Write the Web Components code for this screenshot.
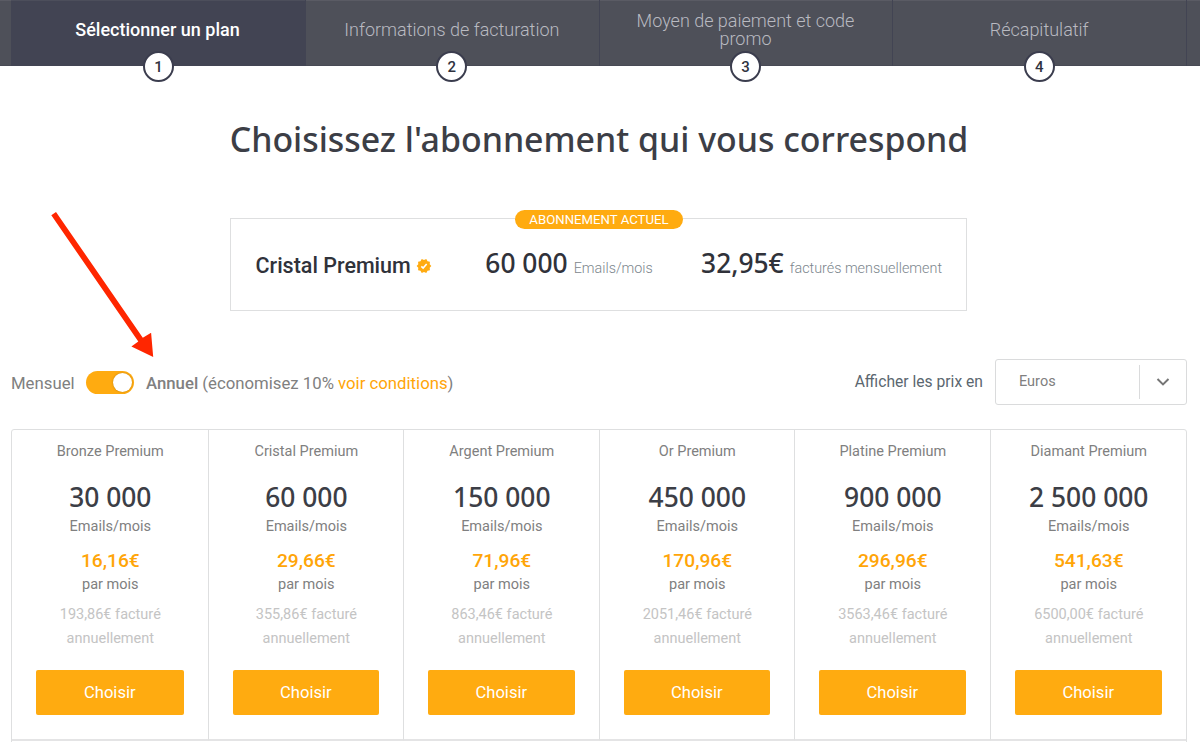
<!DOCTYPE html>
<html lang="fr">
<head>
<meta charset="utf-8">
<title>Choisir un abonnement</title>
<style>
    body {
        margin: 0;
        height: 742px;
        overflow: hidden;
        background: #fff;
        color: #808080;
        font-family: Roboto, sans-serif;
    }
    main { padding: 0 13px 0 11px; }
    h1 {
        margin: 0 0 55px;
        padding: 49px 0 0;
        color: #3c3e46;
        font: 500 33.86px/48px "Noto Sans", sans-serif;
        text-align: center;
        white-space: nowrap;
    }
    .toolbar {
        display: flex;
        justify-content: space-between;
        align-items: center;
        height: 46px;
        margin: 48px 0 24px;
    }
</style>
</head>
<body>

<step-bar>
    <step-item num="1" active>Sélectionner un plan</step-item>
    <step-item num="2">Informations de facturation</step-item>
    <step-item num="3">Moyen de paiement et code promo</step-item>
    <step-item num="4">Récapitulatif</step-item>
</step-bar>

<main>
    <h1>Choisissez l'abonnement qui vous correspond</h1>

    <current-plan>
        <span slot="badge">Abonnement actuel</span>
        <span slot="name">Cristal Premium</span>
        <span slot="volume">60 000</span>
        <span slot="unit">Emails/mois</span>
        <span slot="price">32,95€</span>
        <span slot="billing">facturés mensuellement</span>
    </current-plan>

    <div class="toolbar">
        <billing-toggle checked>
            <span slot="off">Mensuel</span>
            <span slot="on">Annuel</span>
            <span slot="note">(économisez 10% </span>
            <a slot="link">voir conditions</a>
        </billing-toggle>
        <currency-select label="Afficher les prix en">Euros</currency-select>
    </div>

    <plan-grid>
        <plan-card name="Bronze Premium" emails="30 000" price="16,16€" total="193,86€"></plan-card>
        <plan-card name="Cristal Premium" emails="60 000" price="29,66€" total="355,86€"></plan-card>
        <plan-card name="Argent Premium" emails="150 000" price="71,96€" total="863,46€"></plan-card>
        <plan-card name="Or Premium" emails="450 000" price="170,96€" total="2051,46€"></plan-card>
        <plan-card name="Platine Premium" emails="900 000" price="296,96€" total="3563,46€"></plan-card>
        <plan-card name="Diamant Premium" emails="2 500 000" price="541,63€" total="6500,00€"></plan-card>
    </plan-grid>
</main>

<pointer-arrow></pointer-arrow>

<script>
/** Base class: clones the markup of the element into an open shadow root */
class BaseElement extends HTMLElement {
    constructor() {
        super()
        const template = document.createElement('template')
        template.innerHTML = this.constructor.markup
        this.attachShadow({ mode: 'open' })
            .append(template.content.cloneNode(true))
    }

    // Copy attribute values into the [data-attr] nodes
    connectedCallback() {
        this.shadowRoot.querySelectorAll('[data-attr]').forEach( el => {
            el.textContent = this.getAttribute(el.dataset.attr)
        })
    }
}

// Header with the steps of the order
class StepBar extends BaseElement {
    static markup = `
        <style>
            :host {
                display: grid;
                grid-template-columns: 295px repeat(3, 1fr);
                box-sizing: border-box;
                height: 66px;
                padding: 0 13px 0 11px;
                background: #4e5059;
                box-shadow: inset 0 1px #5a5b64, inset 0 -1px #484a55;
            }
        </style>
        <slot></slot>
    `
}

class StepItem extends BaseElement {
    static markup = `
        <style>
            :host {
                display: flex;
                position: relative;
                align-items: center;
                justify-content: center;
                box-sizing: border-box;
                height: 66px;
                padding: 0 31px 7px 30px;
                border-right: 1px solid #424453;
                color: #b9bac1;
                font-size: 18px;
                font-weight: 300;
                line-height: 18px;
                text-align: center;
            }
            :host([active]) {
                background: #424453;
                box-shadow: inset 0 1px #4c4e5b;
                color: #fff;
                font-weight: 500;
            }
            .num {
                position: absolute;
                top: 51px;
                left: calc(50% - 16px);
                box-sizing: border-box;
                width: 31px;
                height: 31px;
                border: 2px solid #3b3d4e;
                border-radius: 50%;
                background: #fff;
                color: #30323f;
                font-size: 15px;
                font-weight: 500;
                line-height: 28px;
            }
            :host([active]) .num { left: calc(50% - 15px); }
        </style>
        <slot></slot>
        <span class="num" data-attr="num"></span>
    `
}

// Box with the plan that is in use
class CurrentPlan extends BaseElement {
    static markup = `
        <style>
            :host {
                display: flex;
                position: relative;
                align-items: baseline;
                justify-content: space-between;
                box-sizing: border-box;
                width: 737px;
                height: 93px;
                margin: 0 auto 0 219px;
                padding: 26px 24px 0 24.5px;
                border: 1px solid #dedfe0;
                color: #30323a;
                white-space: nowrap;
            }
            .badge {
                position: absolute;
                top: -9px;
                left: 284px;
                width: 168px;
                height: 19px;
                border-radius: 10px;
                background: #ffab10;
                color: #fff;
                font-size: 13.2px;
                line-height: 19px;
                text-align: center;
                text-transform: uppercase;
            }
            .name { font-size: 21.5px; font-weight: 500; }
            .volume { margin-left: 5px; }
            .big { margin-right: 2px; font: 500 26.4px/36px "Noto Sans", sans-serif; }
            .small { color: #7c868d; font-size: 14.35px; font-weight: 300; }
            svg { width: 16px; height: 16px; vertical-align: -1px; }
        </style>
        <div class="badge"><slot name="badge"></slot></div>
        <div class="name">
            <slot name="name"></slot>
            <svg viewBox="0 0 24 24">
                <path fill="#ffab10" d="M23 12l-2.44-2.78.34-3.68-3.61-.82-1.89-3.18L12 3 8.6 1.54 6.71 4.72l-3.61.81.34 3.68L1 12l2.44 2.78-.34 3.69 3.61.82 1.89 3.18L12 21l3.4 1.46 1.89-3.18 3.61-.82-.34-3.68z"/>
                <path fill="none" stroke="#fff" stroke-width="2.4" d="M8 12.5l2.7 2.7L16 9"/>
            </svg>
        </div>
        <div class="volume"><span class="big"><slot name="volume"></slot></span> <span class="small"><slot name="unit"></slot></span></div>
        <div><span class="big"><slot name="price"></slot></span> <span class="small"><slot name="billing"></slot></span></div>
    `
}

class BillingToggle extends BaseElement {
    static markup = `
        <style>
            :host {
                display: flex;
                align-items: center;
                font-size: 16.75px;
                line-height: 24px;
                white-space: pre;
            }
            .text { padding-top: 2px; }
            .switch {
                display: flex;
                justify-content: flex-end;
                box-sizing: border-box;
                width: 48px;
                height: 23px;
                margin: 0 12px 0 11.4px;
                padding: 2px;
                border-radius: 12px;
                background: #ffab10;
            }
            .knob {
                width: 19px;
                height: 19px;
                border-radius: 50%;
                background: #fff;
                box-shadow: 0 0 2px rgba(120, 80, 0, .5);
            }
            .on { font-weight: 500; }
            .link { color: #ffa508; }
        </style>
        <span class="text"><slot name="off"></slot></span><div class="switch"><div class="knob"></div></div><span class="text"><span class="on"><slot name="on"></slot></span> <slot name="note"></slot><span class="link"><slot name="link"></slot></span>)</span>`
}

class CurrencySelect extends BaseElement {
    static markup = `
        <style>
            :host {
                display: flex;
                align-items: center;
                gap: 12px;
                color: #5b6770;
                font-size: 15.65px;
                white-space: nowrap;
            }
            .label { margin-top: -2px; }
            .box {
                display: flex;
                align-items: center;
                box-sizing: border-box;
                width: 192px;
                height: 46px;
                border: 1px solid #dadbdc;
                border-radius: 3px;
                color: #808080;
                font-size: 14.5px;
            }
            .value { flex: 1; padding: 0 0 1px 23px; }
            .arrow {
                display: flex;
                align-items: center;
                justify-content: center;
                width: 46px;
                height: 34px;
                border-left: 1px solid #dadbdc;
            }
        </style>
        <span class="label" data-attr="label"></span>
        <div class="box">
            <span class="value"><slot></slot></span>
            <span class="arrow">
                <svg width="14" height="10" viewBox="0 0 14 10"><path d="M1.5 2L7 7.4 12.5 2" fill="none" stroke="#757575" stroke-width="2"/></svg>
            </span>
        </div>
    `
}

class PlanGrid extends BaseElement {
    static markup = `
        <style>
            :host {
                display: grid;
                grid-template-columns: 196.6px repeat(5, 1fr);
                box-sizing: border-box;
                height: 320px;
                border: 1px solid #dedfe0;
                border-radius: 3px;
            }
        </style>
        <slot></slot>
    `
}

class PlanCard extends BaseElement {
    static markup = `
        <style>
            :host {
                display: flex;
                flex-direction: column;
                box-sizing: border-box;
                height: 311px;
                padding: 10px 24px 0;
                border-right: 1px solid #dedfe0;
                border-bottom: 2px solid #e4e4e5;
                font-size: 14.5px;
                line-height: 24px;
                text-align: center;
                white-space: nowrap;
            }
            :host(:last-child) { border-right: 0; }
            div { padding-left: 1px; }
            .emails {
                margin-top: 15px;
                color: #3c3e46;
                font: 500 26.4px/36px "Noto Sans", sans-serif;
            }
            .price {
                margin-top: 10px;
                color: #ffa508;
                font-size: 19.2px;
                font-weight: 500;
            }
            .total { margin-top: 6px; color: #c4c4c4; }
            button {
                height: 45px;
                margin-top: 19px;
                padding: 0;
                border: 0;
                border-radius: 2px;
                background: #ffab10;
                color: #fff;
                font: 400 16.6px/46px Roboto, sans-serif;
            }
        </style>
        <div data-attr="name"></div>
        <div class="emails" data-attr="emails"></div>
        <div>Emails/mois</div>
        <div class="price" data-attr="price"></div>
        <div>par mois</div>
        <div class="total"><span data-attr="total"></span> facturé<br>annuellement</div>
        <button>Choisir</button>
    `
}

// Red arrow that lies over the page and points at the toggle
class PointerArrow extends BaseElement {
    static markup = `
        <style>
            :host {
                position: absolute;
                top: 208px;
                left: 48px;
                width: 110px;
                height: 154px;
                pointer-events: none;
            }
        </style>
        <svg width="110" height="154" viewBox="48 208 110 154">
            <path fill="#ff2600" d="M51.3 215.2l4.7-3.3 86.8 125.8 8.3-4.9 2.1 24.3-21.8-10.6 6.9-5z"/>
        </svg>
    `
}

customElements.define('step-bar', StepBar)
customElements.define('step-item', StepItem)
customElements.define('current-plan', CurrentPlan)
customElements.define('billing-toggle', BillingToggle)
customElements.define('currency-select', CurrencySelect)
customElements.define('plan-grid', PlanGrid)
customElements.define('plan-card', PlanCard)
customElements.define('pointer-arrow', PointerArrow)
</script>
</body>
</html>
